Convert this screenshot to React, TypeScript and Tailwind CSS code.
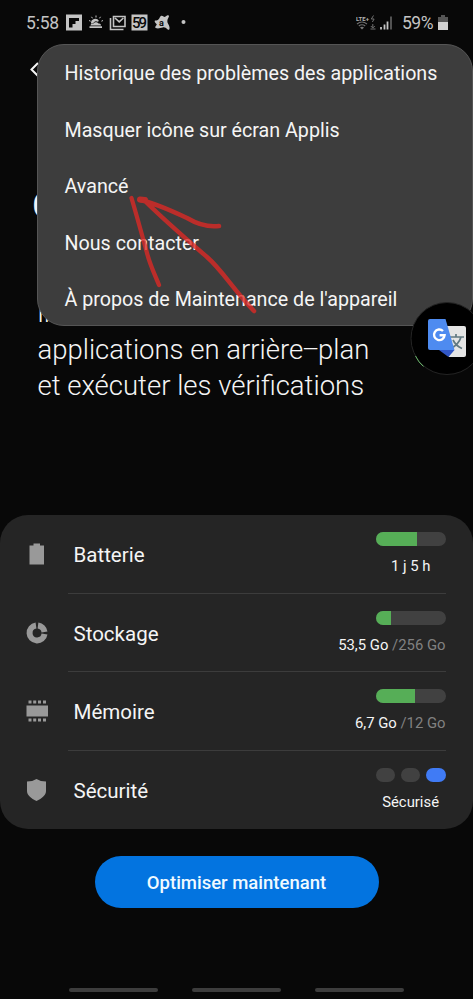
import React from 'react';

const menuItems = [
  'Historique des problèmes des applications',
  'Masquer icône sur écran Applis',
  'Avancé',
  'Nous contacter',
  "À propos de Maintenance de l'appareil",
];

const StatusBar: React.FC = () => (
  <header className="flex h-11 items-center justify-between pl-[26px] pr-[25px] text-[#c4c4c4]">
    <div className="flex items-center pt-px">
      <span className="w-[40px] text-[17.5px] leading-5 tracking-[-0.2px]">5:58</span>
      <svg className="h-[17px] w-[120px]" viewBox="66 14 120 17" fill="#c4c4c4">
        <path fillRule="evenodd" d="M66 14.500h16v16h-16z M69 18v9.500h3.500v-3.500h3v-3h3.500v-3z" />
        <path d="M91 23.500a4.300 4.300 0 0 1 8-2.500l-1.500.7a3 3 0 0 0-3.500.5l-1 1.300z" />
        <path d="M90.500 25.500c0-1.500 1.500-2 2.500-1.500 1-2 4-2.500 5.500-.5 1.500-.3 2.500.5 2.500 2z M89.500 26.300h12.500v1.700h-12.500z" />
        <path d="M96 15.500v2 M91.500 16.800l1 1.500 M100.500 16.800l-1 1.500 M89 20.500l1.600.7 M103 20.500l-1.600.7" stroke="#c4c4c4" strokeWidth="1" />
        <path d="M110.500 18v11.500h13" fill="none" stroke="#c4c4c4" strokeWidth="1.600" />
        <path d="M113.500 16.500h11.500v10h-11.500z M115 18l4.200 3.800 4.200-3.800" fill="none" stroke="#c4c4c4" strokeWidth="1.600" />
        <rect x="131.500" y="14.500" width="16" height="16" />
        <text x="132" y="28" className="fill-[#080808] text-[15px] font-medium" textLength="15">59</text>
        <path d="M155 20.500c2 0 4-.5 5-3.500 1-2 2.500-1.500 3.500-.5s2 0 3.500-1c2-.8 2.500.3 1.500 2-1.500 2.500-1.500 4.500-.3 6.500 2 3 1.800 7-.5 5.500-2-1.500-3-2.500-5-2-2.500.7-5 1.300-7 .5-1.500-1 1-2.500 1-3.500s-3-2.500-1.700-4z" />
        <text x="159" y="25.500" className="fill-[#080808] text-[9px] font-bold">a</text>
        <circle cx="183.500" cy="22" r="2" />
      </svg>
    </div>
    <div className="flex items-center pt-px">
      <svg className="mr-[9px] h-[16px] w-[37px]" viewBox="356 15 37 16" fill="none" stroke="#707070">
        <text x="356" y="20.500" stroke="none" className="fill-[#b0b0b0] text-[6px] font-bold" textLength="13">LTE+</text>
        <path d="M357 24q5-4 10 0 M358.800 26q3.200-2.500 6.400 0" strokeWidth="1.200" />
        <path d="M360 27.500q2-1.300 4 0l-2 2z" fill="#777" stroke="none" />
        <path d="M373.500 15.500l-2.200 3.500h2.800l-1.700 3 M372.800 24v3.500 M370.800 26l2 2 2-2 M370.500 29h5" />
        <path d="M381 29.500v-2.500 M384.500 29.500v-5" stroke="#c4c4c4" strokeWidth="1.800" />
        <path d="M387.500 29.500v-8" stroke="#c4c4c4" strokeWidth="1.800" />
        <path d="M391 29.500v-13" stroke="#5c5c5c" strokeWidth="1.800" />
      </svg>
      <span className="w-[36px] text-[17.5px] leading-5 tracking-[-0.5px]">59%</span>
      <svg className="h-[15px] w-[10px]" viewBox="0 0 10 15">
        <path d="M3 0h4v2h3v13h-10v-13h3z" fill="#555" />
        <path d="M0 7h10v8h-10z" fill="#d0d0d0" />
      </svg>
    </div>
  </header>
);

const RedArrow: React.FC = () => (
  <svg className="pointer-events-none absolute left-[120px] top-[185px] h-[140px] w-[145px]" viewBox="120 185 145 140" fill="none" stroke="#df2925" strokeLinecap="round" opacity="0.78">
    <path d="M131.500 198C138 220 142 235 147 253C150 265 155 275 159 285" strokeWidth="4.300" />
    <path d="M219 226Q204 228 187 218C170 210 155 203 140 200L144 200C164 220 185 238 207 257C222 270 233 289 254 311" strokeWidth="4.500" strokeLinejoin="round" />
    <path d="M140 199.500l5 .5" strokeWidth="6" />
  </svg>
);

const OptionsMenu: React.FC = () => (
  <nav className="absolute left-[37px] top-[44px] h-[282px] w-[436px] rounded-[27px] border border-[#555] bg-[#3d3d3d]">
    <ul>
      {menuItems.map((item) => (
        <li key={item} className="flex h-[56.500px] items-center whitespace-nowrap pl-[26.500px] pt-[2px] text-[19.680px] text-[#f5f5f5]">
          {item}
        </li>
      ))}
    </ul>
  </nav>
);

const TranslateBubble: React.FC = () => (
  <div className="absolute left-[410px] top-[302px] h-[74px] w-[63px] overflow-hidden">
    <svg className="h-[74px] w-[74px]" viewBox="0 0 74 74">
      <circle cx="37" cy="36.500" r="36" fill="#000" stroke="#242424" />
      <path d="M5.500 54q3 6.500 8 10.500" stroke="#69b96a" fill="none" />
      <path d="M32 24h22a2 2 0 0 1 2 2v27a2 2 0 0 1-2 2h-15z" fill="#e5e5e5" />
      <path d="M40 35h14 M46 32v3 M51 35q-2 7-10 11.500 M43 38q3 6 9 8.500" stroke="#617981" strokeWidth="1.700" fill="none" />
      <path d="M29 48h15.500l-6 7z" fill="#3157c7" />
      <path d="M20 17h15.500l9 31h-24.500a2 2 0 0 1-2-2v-27a2 2 0 0 1 2-2z" fill="#4e8bf0" />
      <path d="M33 29a5.300 5.300 0 1 0 1.600 4.200h-5" stroke="#fff" strokeWidth="2.400" fill="none" />
    </svg>
  </div>
);

interface MeterProps {
  value: number;
}

const Meter: React.FC<MeterProps> = ({ value }) => (
  <div className="h-[14px] w-[69.500px] overflow-hidden rounded-full bg-[#414141]">
    <div className="h-full bg-[#56ae57]" style={{ width: `${value}%` }} />
  </div>
);

interface RowProps {
  label: string;
  icon: React.ReactNode;
  children: React.ReactNode;
  last?: boolean;
}

const Row: React.FC<RowProps> = ({ label, icon, children, last }) => (
  <li className="flex h-[78.500px] pl-[26px] pr-[27.500px]">
    <div className="flex w-[42px] items-center">
      <svg className="h-[22px] w-[22px]" viewBox="0 0 22 22" fill="#999">{icon}</svg>
    </div>
    <div className={`flex flex-1 justify-between pl-[5.500px] ${last ? '' : 'border-b-[1.500px] border-[#3c3c3c]'}`}>
      <span className="self-center pt-[4px] text-[20.500px] text-[#f5f5f5]">{label}</span>
      <div className="flex flex-col items-end pt-[17px] text-[14.850px] text-[#f5f5f5]">{children}</div>
    </div>
  </li>
);

const App: React.FC = () => {
  return (
    <div className="relative h-[999px] w-[473px] overflow-hidden bg-[#080808] font-[Roboto,sans-serif] antialiased">
      <StatusBar />

      <main className="flex flex-col">
        <div className="flex h-[471px] flex-col text-[#f5f5f5]">
          <svg className="ml-[29px] mt-[17px] h-[17px] w-[12px]" viewBox="0 0 12 17" fill="none" stroke="#f5f5f5" strokeWidth="2">
            <path d="M9 2L2.500 8.500L9 15" />
          </svg>
          <h1 className="ml-[32px] mt-[105px] h-[46px] text-[36px] leading-[46px] opacity-99">C</h1>
          <p className="mt-[66px] whitespace-nowrap pl-[37.500px] text-[27.500px] font-light leading-[36.500px]">
            li<br />applications en arrière<span className="-mx-[1.500px]">–</span>plan<br />et exécuter les vérifications
          </p>
        </div>

        <ul className="h-[314px] rounded-[28px] bg-[#252525]">
          <Row label="Batterie" icon={<path d="M7.500 0.500h6.500v2h4v19h-14.500v-19h4z" />}>
            <Meter value={59} />
            <span className="mr-[15px] mt-[9px]">1 j 5 h</span>
          </Row>
          <Row
            label="Stockage"
            icon={
              <>
                <path d="M10 3.500A7.500 7.500 0 1 0 18.500 12" fill="none" stroke="#999" strokeWidth="6" />
                <path d="M12 3.500A7.500 7.500 0 0 1 18.500 10" fill="none" stroke="#999" strokeWidth="6" />
              </>
            }
          >
            <Meter value={21} />
            <span className="mt-[9px]">53,5 Go <span className="text-[#818181]">/256 Go</span></span>
          </Row>
          <Row label="Mémoire" icon={<path d="M0.500 5.500h21.500v11h-21.500z M2.500 .5h3v3h-3z M7.200 .5h3v3h-3z M12 .5h3v3h-3z M17 .5h3v3h-3z M2.500 18.500h3v3h-3z M7.200 18.500h3v3h-3z M12 18.500h3v3h-3z M17 18.500h3v3h-3z" />}>
            <Meter value={56} />
            <span className="mt-[9px]">6,7 Go <span className="text-[#818181]">/12 Go</span></span>
          </Row>
          <Row label="Sécurité" last icon={<path d="M10.500 0q4 2.500 9.500 2.500v9.500c0 4-4 7.500-9.500 10c-5.500-2.500-9.500-6-9.500-10v-9.500q5.500 0 9.500-2.500z" />}>
            <div className="flex h-[14px] gap-[6px]">
              <span className="w-[19px] rounded-full bg-[#414141]" />
              <span className="w-[19px] rounded-full bg-[#414141]" />
              <span className="w-[19.500px] rounded-full bg-[#407bf5]" />
            </div>
            <span className="mr-[6.500px] mt-[9px]">Sécurisé</span>
          </Row>
        </ul>

        <button className="mt-[27px] h-[52px] w-[284px] self-center rounded-full bg-[#0374e0] pt-[3px] text-[18.500px] font-medium text-[#f0faff]">
          Optimiser maintenant
        </button>
      </main>

      <footer className="mt-[80px] flex justify-center gap-[34px]">
        <span className="h-[4px] w-[89px] rounded-full bg-[#3d3d3d]" />
        <span className="h-[4px] w-[89px] rounded-full bg-[#3d3d3d]" />
        <span className="h-[4px] w-[89px] rounded-full bg-[#3d3d3d]" />
      </footer>

      <OptionsMenu />
      <RedArrow />
      <TranslateBubble />
    </div>
  );
};

export default App;
